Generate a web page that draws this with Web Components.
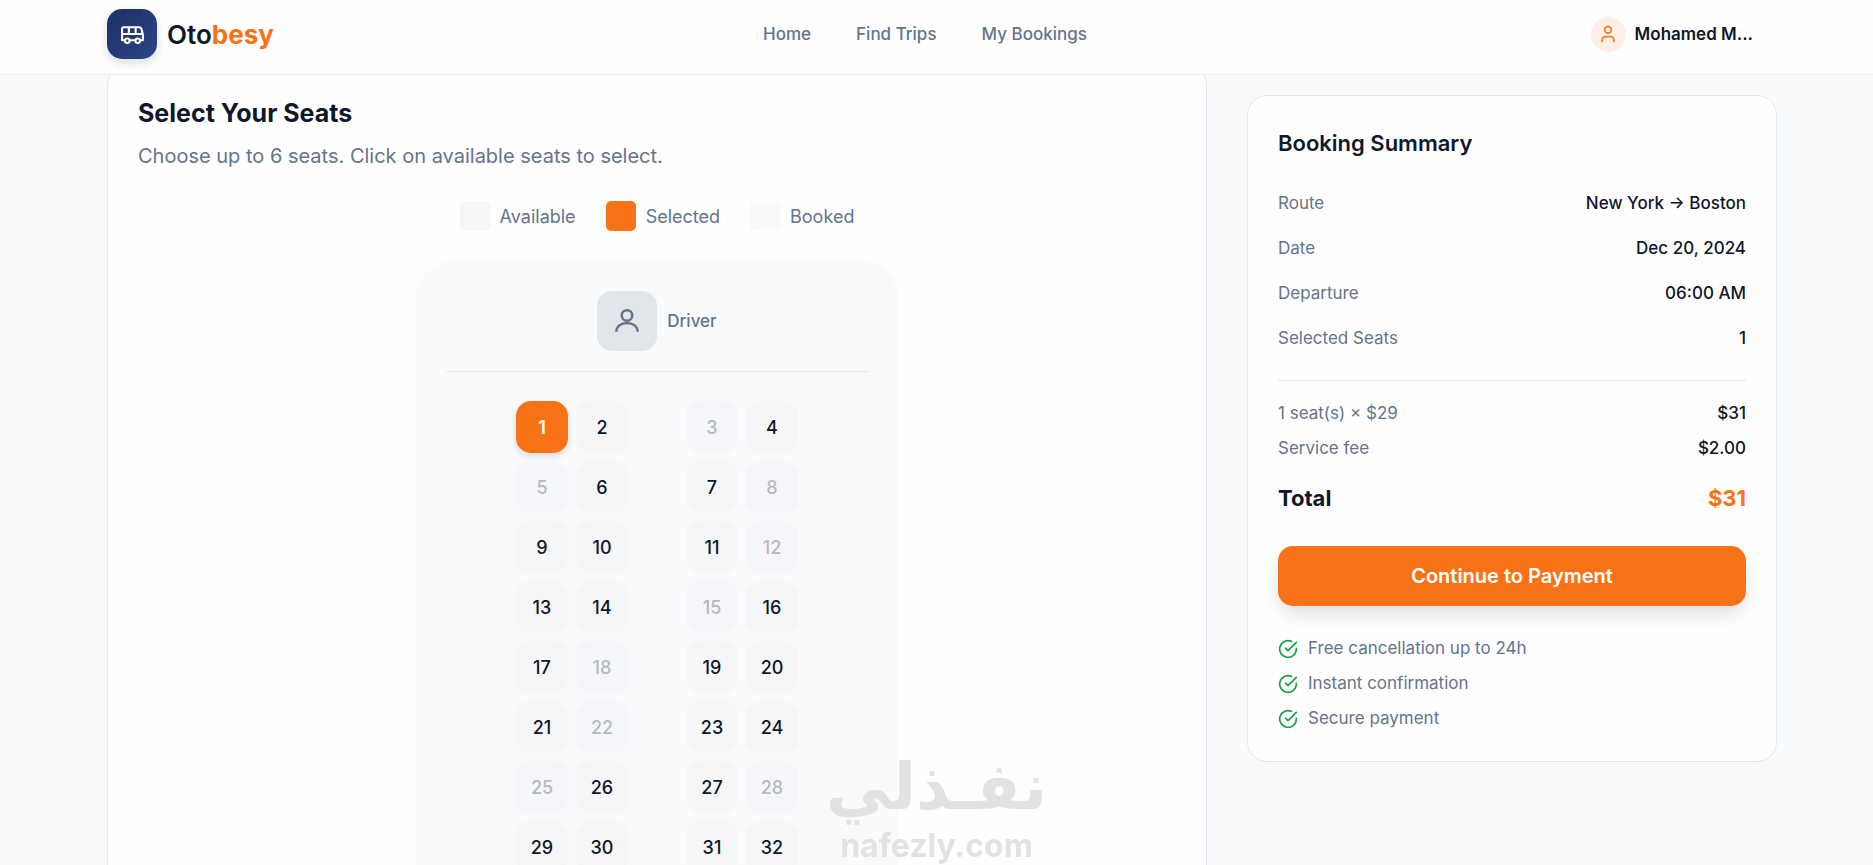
<!DOCTYPE html>
<html lang="en">
<head>
<meta charset="utf-8">
<meta name="viewport" content="width=device-width, initial-scale=1">
<title>Otobesy – Select Your Seats</title>
<style>
  :root {
    --ink: #0f172a;
    --muted: #64748b;
    --line: #e2e8f0;
    --surface: #f8fafc;
    --accent: #f97316;
  }
  body {
    margin: 0;
    background: #f9fafc;
    color: var(--ink);
    font: 400 17px/25px Inter, "Open Sans", sans-serif;
  }
</style>
</head>
<body>
<booking-page></booking-page>

<script>
const define = (name, html, setup) => {
  const template = document.createElement('template');
  template.innerHTML = html;
  customElements.define(name, class extends HTMLElement {
    constructor() {
      super();
      this.attachShadow({ mode: 'open' }).append(template.content.cloneNode(true));
    }
    connectedCallback() {
      if (setup) setup(this, this.shadowRoot);
    }
  });
};

/* Header */
define('site-logo', `
  <style>
    :host { display: block; }
    a { display: flex; align-items: center; gap: 10px; color: var(--ink); text-decoration: none;
        font-size: 26px; font-weight: 600; line-height: 35px; }
    .mark { display: grid; place-items: center; width: 50px; height: 50px; border-radius: 15px;
            background: linear-gradient(135deg, #1e3066, #2b4585); box-shadow: 0 4px 8px rgb(15 23 42 / .14); }
    svg { width: 25px; height: 25px; }
    b { color: var(--accent); font-weight: 700; }
  </style>
  <a href="#home">
    <span class="mark"><svg viewBox="0 0 24 24" fill="none" stroke="#fff" stroke-width="2" stroke-linejoin="round" aria-hidden="true">
      <path d="M4.500 17.500H2V6.500A1.500 1.500 0 0 1 3.500 5H18.500Q20 5 20.500 6.500L22 12V17.500H19.500M9.500 17.500H14.500M2 11.500H22M8.500 5V11.500M15 5V11.500"/>
      <circle cx="7" cy="18" r="2.200"/><circle cx="17" cy="18" r="2.200"/>
    </svg></span>
    <span>Oto<b>besy</b></span>
  </a>`);

define('site-header', `
  <style>
    :host { display: block; position: sticky; top: 0; z-index: 10; background: #fefefe; border-bottom: 1px solid #eceff2; }
    .bar { display: grid; grid-template-columns: 1fr auto 1fr; align-items: center; padding: 9px 120px 15px 107px; }
    nav { display: flex; gap: 45px; margin-right: 10px; }
    nav a { color: var(--muted); text-decoration: none; font-weight: 500; }
    button { justify-self: end; display: flex; align-items: center; gap: 9px; padding: 0; border: 0; background: none;
             font: inherit; font-weight: 600; color: var(--ink); cursor: pointer; }
    .avatar { display: grid; place-items: center; width: 35px; height: 35px; border-radius: 50%; background: #feefe6; }
    svg { width: 20px; height: 20px; }
  </style>
  <div class="bar">
    <site-logo></site-logo>
    <nav aria-label="Main"><a href="#home">Home</a><a href="#trips">Find Trips</a><a href="#bookings">My Bookings</a></nav>
    <button type="button">
      <span class="avatar"><svg viewBox="0 0 24 24" fill="none" stroke="#f97316" stroke-width="2" stroke-linecap="round" aria-hidden="true">
        <circle cx="12" cy="7" r="4"/><path d="M19 21V19A4 4 0 0 0 15 15H9A4 4 0 0 0 5 19V21"/></svg></span>
      <span>Mohamed M...</span>
    </button>
  </div>`);

/* Seat selection */
define('legend-item', `
  <style>
    :host { display: flex; align-items: center; gap: 10px; color: var(--muted); font-size: 18px; }
    i { width: 30px; height: 30px; border-radius: 5px; background: #f4f6f8; }
    :host([kind="selected"]) i { background: var(--accent); }
    :host([kind="booked"]) i { background: #f7f9fa; }
  </style>
  <i></i><slot></slot>`);

define('bus-seat', `
  <style>
    :host { display: block; }
    button { display: block; width: 100%; height: 52px; padding: 0; border: 0; border-radius: 15px;
             background: #f4f6f8; color: var(--ink); font: inherit; font-size: 18px; font-weight: 500; cursor: pointer; }
    button:disabled { color: #b4b9c2; background: #f4f6fa; cursor: not-allowed; }
    button[aria-pressed="true"] { background: var(--accent); color: #fff; font-weight: 600; box-shadow: 0 3px 6px rgb(15 23 42 / .14); }
  </style>
  <button type="button"><slot></slot></button>`, (host, root) => {
  const button = root.querySelector('button');
  button.disabled = host.hasAttribute('booked');
  button.setAttribute('aria-pressed', host.hasAttribute('selected'));
});

define('bus-layout', `
  <style>
    :host { display: block; box-sizing: border-box; width: 100%; max-width: 482px; margin: 0 auto; padding: 30px;
            border-radius: 38px; background: var(--surface); }
    .driver { display: flex; align-items: center; justify-content: center; gap: 10px; padding-bottom: 20px;
              border-bottom: 1px solid var(--line); color: var(--muted); font-weight: 500; }
    .wheel { display: grid; place-items: center; width: 60px; height: 60px; border-radius: 15px; background: #e2e6eb; }
    svg { width: 30px; height: 30px; }
    .seats { display: grid; grid-template-columns: 52px 52px 42px 52px 52px; gap: 8px; justify-content: center; padding-top: 29px; }
    bus-seat:nth-child(4n + 3) { grid-column: 4; }
  </style>
  <div class="driver">
    <span class="wheel"><svg viewBox="0 0 24 24" fill="none" stroke="#64748b" stroke-width="2" aria-hidden="true">
      <circle cx="12" cy="7.500" r="4.200"/><path d="M3.500 20.500C3.500 16.500 7 13.500 12 13.500S20.500 16.500 20.500 20.500"/></svg></span>
    <span>Driver</span>
  </div>
  <div class="seats"></div>`, (host, root) => {
  const booked = [3, 5, 8, 12, 15, 18, 22, 25, 28];
  const seats = root.querySelector('.seats');
  for (let n = 1; n <= 32; n++) {
    const seat = document.createElement('bus-seat');
    seat.textContent = n;
    seat.toggleAttribute('booked', booked.includes(n));
    seat.toggleAttribute('selected', n === 1);
    seats.append(seat);
  }
});

define('seat-picker', `
  <style>
    :host { display: block; padding: 30px; background: #fefefe; border: 1px solid var(--line); border-radius: 20px; }
    h2 { margin: 0; font-size: 25px; line-height: 35px; font-weight: 700; }
    p { margin: 10px 0 30px; font-size: 20px; line-height: 30px; color: var(--muted); }
    .legend { display: flex; flex-wrap: wrap; justify-content: center; gap: 30px; margin-bottom: 30px; }
  </style>
  <h2>Select Your Seats</h2>
  <p>Choose up to 6 seats. Click on available seats to select.</p>
  <div class="legend">
    <legend-item>Available</legend-item>
    <legend-item kind="selected">Selected</legend-item>
    <legend-item kind="booked">Booked</legend-item>
  </div>
  <bus-layout></bus-layout>`);

/* Booking summary */
define('summary-row', `
  <style>
    :host { display: flex; justify-content: space-between; gap: 20px; }
    .label { color: var(--muted); }
    .value { font-weight: 500; }
    :host([total]) { font-size: 22px; line-height: 35px; }
    :host([total]) .label { color: var(--ink); font-weight: 700; }
    :host([total]) .value { color: var(--accent); font-weight: 700; }
  </style>
  <span class="label"><slot name="label"></slot></span>
  <span class="value"><slot></slot></span>`);

define('check-item', `
  <style>
    :host { display: flex; align-items: center; gap: 10px; color: var(--muted); }
    svg { width: 20px; height: 20px; }
  </style>
  <svg viewBox="0 0 24 24" fill="none" stroke="#16a34a" stroke-width="2" stroke-linecap="round" stroke-linejoin="round" aria-hidden="true">
    <path d="M22 11.080V12A10 10 0 1 1 16.070 2.860"/><path d="M22 4L12 14.010L9 11.010"/></svg>
  <slot></slot>`);

define('booking-summary', `
  <style>
    :host { display: block; padding: 30px; background: #fefefe; border: 1px solid var(--line); border-radius: 20px; }
    h2 { margin: 0 0 30px; font-size: 22px; line-height: 35px; font-weight: 600; }
    .group { display: grid; gap: 10px; }
    .trip { gap: 20px; padding-bottom: 29px; border-bottom: 1px solid var(--line); }
    .price { padding: 20px 0; }
    button { display: block; width: 100%; height: 60px; margin: 30px 0; border: 0; border-radius: 15px; background: var(--accent);
             color: #fff; font: inherit; font-size: 20px; font-weight: 600; cursor: pointer;
             box-shadow: 0 10px 18px -4px rgb(15 23 42 / .16); }
  </style>
  <h2>Booking Summary</h2>
  <div class="group trip">
    <summary-row><span slot="label">Route</span>New York → Boston</summary-row>
    <summary-row><span slot="label">Date</span>Dec 20, 2024</summary-row>
    <summary-row><span slot="label">Departure</span>06:00 AM</summary-row>
    <summary-row><span slot="label">Selected Seats</span>1</summary-row>
  </div>
  <div class="group price">
    <summary-row><span slot="label">1 seat(s) × $29</span>$31</summary-row>
    <summary-row><span slot="label">Service fee</span>$2.00</summary-row>
  </div>
  <summary-row total><span slot="label">Total</span>$31</summary-row>
  <button type="button">Continue to Payment</button>
  <div class="group">
    <check-item>Free cancellation up to 24h</check-item>
    <check-item>Instant confirmation</check-item>
    <check-item>Secure payment</check-item>
  </div>`);

/* Translucent brand stamp laid over the page */
define('brand-stamp', `
  <style>
    :host { position: fixed; left: 0; right: 0; bottom: 0; z-index: 20; display: grid; justify-items: center; pointer-events: none;
            color: #dfe0e0; opacity: .92; font-weight: 700; }
    .ar { font: 700 65px/80px "DejaVu Sans", sans-serif; }
    .en { font-size: 32px; line-height: 38px; }
  </style>
  <span class="ar" lang="ar" dir="rtl">نفـذلي</span>
  <span class="en">nafezly.com</span>`);

define('booking-page', `
  <style>
    :host { display: block; }
    main { display: grid; grid-template-columns: minmax(0, 1100fr) minmax(0, 530fr); gap: 40px; align-items: start;
           padding: 0 96px 0 107px; }
    seat-picker { margin-top: -10px; }
    booking-summary { margin-top: 20px; }
  </style>
  <site-header></site-header>
  <main>
    <seat-picker></seat-picker>
    <booking-summary></booking-summary>
  </main>
  <brand-stamp></brand-stamp>`);
</script>
</body>
</html>
